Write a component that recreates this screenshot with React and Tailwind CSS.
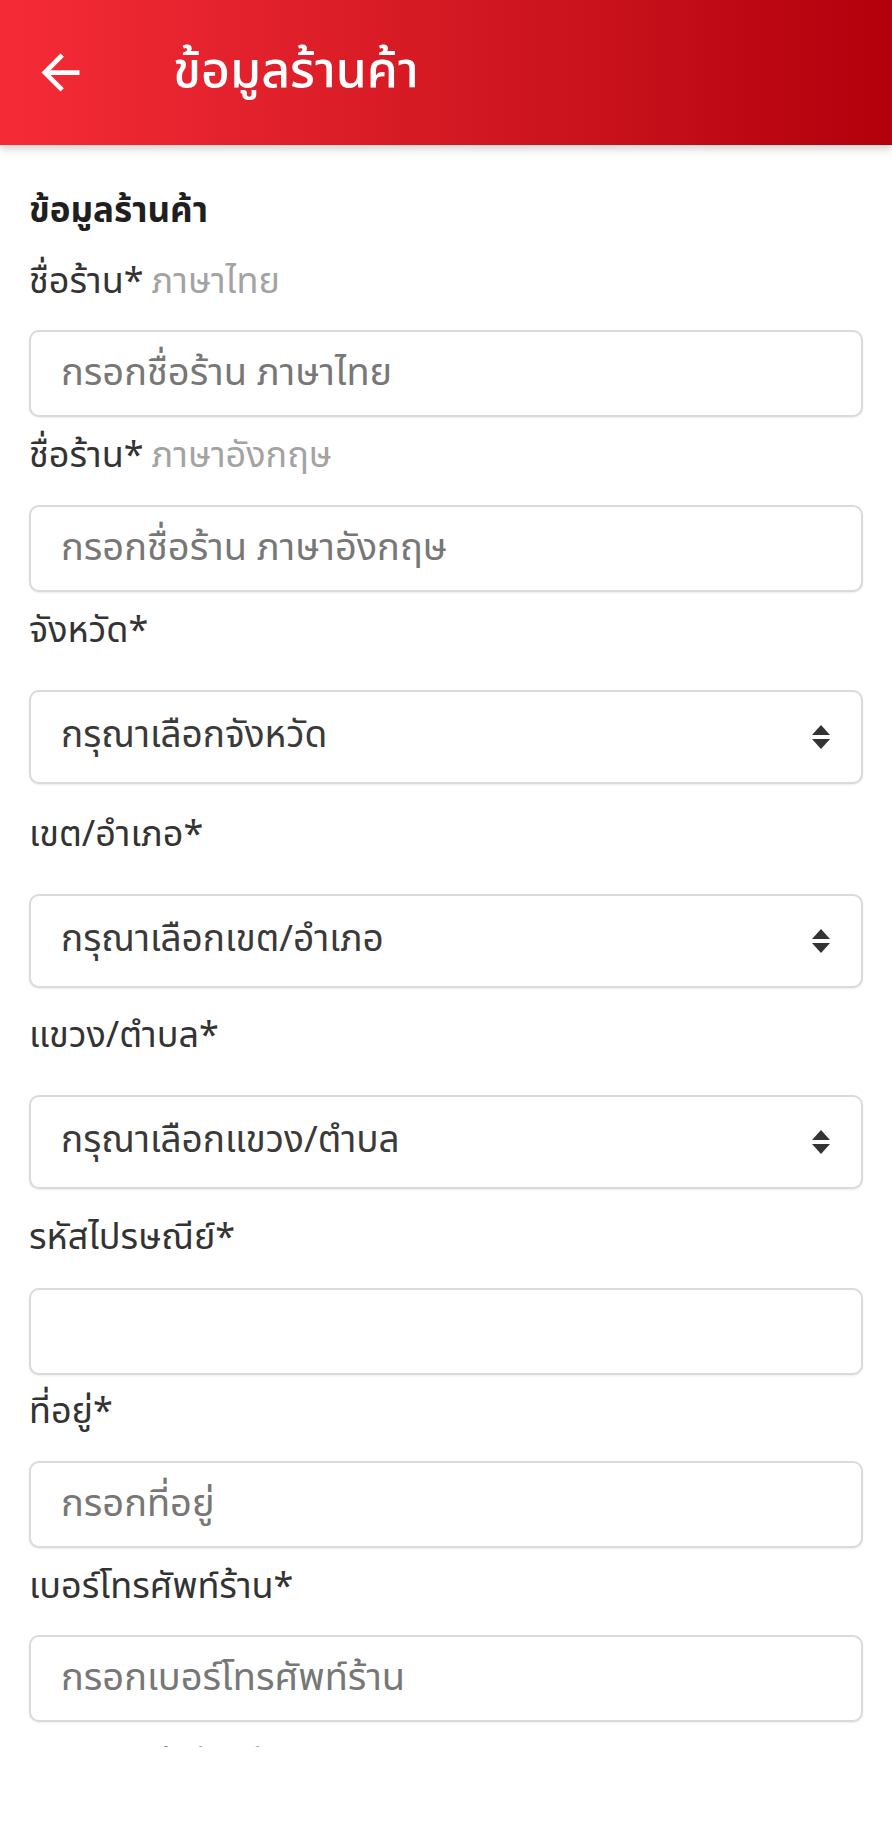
import React from 'react';

const FONT = "font-['Noto_Sans_Thai','Noto_Sans',sans-serif]";

const BackArrow = () => (
  <svg width="57" height="57" viewBox="0 0 24 24" fill="#ffffff">
    <path d="M20 11H7.83l5.59-5.59L12 4l-8 8 8 8 1.41-1.41L7.83 13H20v-2z" />
  </svg>
);

const SortArrows = () => (
  <svg width="20" height="26" viewBox="0 0 20 26" fill="#333333">
    <path d="M10 1 L19 11 H1 Z" />
    <path d="M10 25 L19 15 H1 Z" />
  </svg>
);

const Label = ({ text, hint, className = '' }) => (
  <div className={`h-[44px] leading-[44px] text-[36px] text-[#333333] whitespace-nowrap ${className}`}>
    {text}
    {hint && <span className="ml-2 text-[#a3a3a3]">{hint}</span>}
  </div>
);

const TextField = ({ placeholder, className = '' }) => (
  <input
    type="text"
    placeholder={placeholder}
    className={`block w-full h-[87px] px-[30px] text-[38px] text-[#333333] placeholder:text-[#777777] bg-white border-2 border-[#dadada] rounded-[10px] shadow-[0_1px_2px_rgba(0,0,0,0.08)] outline-none ${className}`}
  />
);

const SelectField = ({ placeholder, className = '' }) => (
  <div className={`relative h-[94px] ${className}`}>
    <select
      defaultValue=""
      className="block w-full h-full appearance-none pl-[30px] pr-[70px] text-[37px] text-[#3a3a3a] bg-white border-2 border-[#dadada] rounded-[10px] shadow-[0_1px_2px_rgba(0,0,0,0.08)] outline-none"
    >
      <option value="" disabled>{placeholder}</option>
    </select>
    <div className="absolute right-[32px] top-1/2 -translate-y-1/2 pointer-events-none">
      <SortArrows />
    </div>
  </div>
);

export default function App() {
  return (
    <div className={`w-[892px] h-[1834px] bg-white flex flex-col ${FONT}`}>
      <header className="relative z-10 h-[145px] shrink-0 flex items-center px-[32px] bg-gradient-to-r from-[#f52b37] to-[#b3000b] shadow-[0_4px_8px_rgba(0,0,0,0.18)]">
        <BackArrow />
        <h1 className="ml-[84px] text-[50px] font-medium text-white">ข้อมูลร้านค้า</h1>
      </header>

      <div className="h-[1602px] shrink-0 overflow-hidden px-[29px]">
        <div className="mt-[45px] h-[44px] leading-[44px] text-[35px] font-bold text-[#1f1f1f]">ข้อมูลร้านค้า</div>

        <Label text="ชื่อร้าน*" hint="ภาษาไทย" className="mt-[26px]" />
        <TextField placeholder="กรอกชื่อร้าน ภาษาไทย" className="mt-[26px]" />

        <Label text="ชื่อร้าน*" hint="ภาษาอังกฤษ" className="mt-[17px]" />
        <TextField placeholder="กรอกชื่อร้าน ภาษาอังกฤษ" className="mt-[27px]" />

        <Label text="จังหวัด*" className="mt-[17px]" />
        <SelectField placeholder="กรุณาเลือกจังหวัด" className="mt-[37px]" />

        <Label text="เขต/อำเภอ*" className="mt-[29px]" />
        <SelectField placeholder="กรุณาเลือกเขต/อำเภอ" className="mt-[37px]" />

        <Label text="แขวง/ตำบล*" className="mt-[26px]" />
        <SelectField placeholder="กรุณาเลือกแขวง/ตำบล" className="mt-[37px]" />

        <Label text="รหัสไปรษณีย์*" className="mt-[27px]" />
        <TextField placeholder="" className="mt-[28px]" />

        <Label text="ที่อยู่*" className="mt-[15px]" />
        <TextField placeholder="กรอกที่อยู่" className="mt-[27px]" />

        <Label text="เบอร์โทรศัพท์ร้าน*" className="mt-[17px]" />
        <TextField placeholder="กรอกเบอร์โทรศัพท์ร้าน" className="mt-[26px]" />

        <Label text="อีเมลติดต่อร้านค้า*" className="mt-[22px]" />
      </div>

      <div className="flex-1 bg-white" />
    </div>
  );
}
